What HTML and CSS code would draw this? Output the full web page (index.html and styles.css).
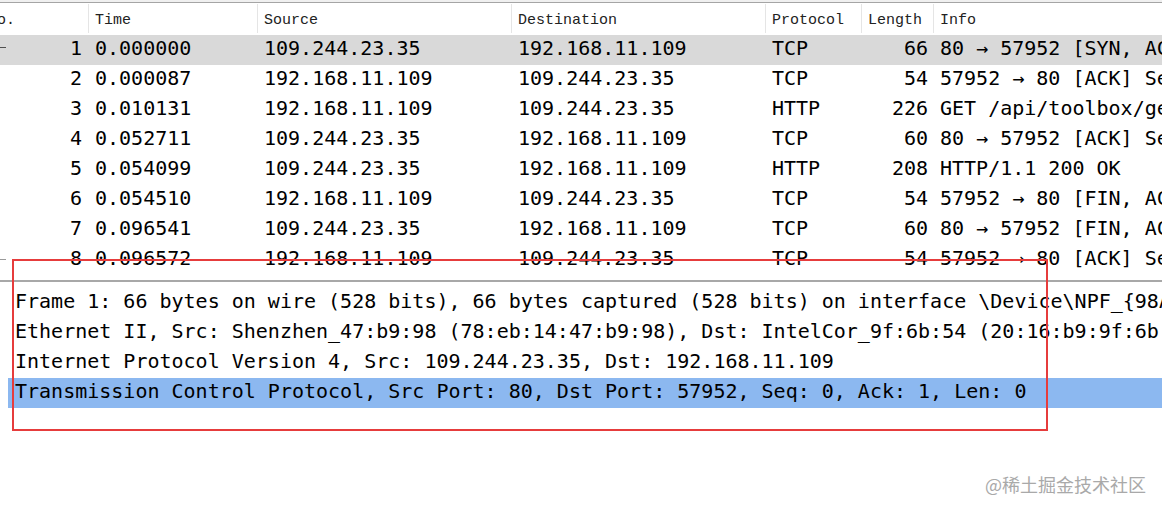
FILE: index.html
```html
<!DOCTYPE html>
<html>
<head>
<meta charset="utf-8">
<link rel="stylesheet" href="styles.css">
</head>
<body>
<div class="app">
  <div class="topbar"></div>
  <div class="plist">
    <div class="row head">
      <div class="c c0">No.</div>
      <div class="c">Time</div>
      <div class="c">Source</div>
      <div class="c">Destination</div>
      <div class="c">Protocol</div>
      <div class="c">Length</div>
      <div class="c last">Info</div>
    </div>
    <div class="row data sel">
      <div class="c c0 num"><span class="tree dark"></span>1</div>
      <div class="c">0.000000</div>
      <div class="c">109.244.23.35</div>
      <div class="c">192.168.11.109</div>
      <div class="c">TCP</div>
      <div class="c len">66</div>
      <div class="c info">80 → 57952 [SYN, ACK] Seq=0 Ack=1 Win=14600 Len=0 MSS=1440</div>
    </div>
    <div class="row data">
      <div class="c c0 num">2</div>
      <div class="c">0.000087</div>
      <div class="c">192.168.11.109</div>
      <div class="c">109.244.23.35</div>
      <div class="c">TCP</div>
      <div class="c len">54</div>
      <div class="c info">57952 → 80 [ACK] Seq=1 Ack=1 Win=65536 Len=0</div>
    </div>
    <div class="row data">
      <div class="c c0 num">3</div>
      <div class="c">0.010131</div>
      <div class="c">192.168.11.109</div>
      <div class="c">109.244.23.35</div>
      <div class="c">HTTP</div>
      <div class="c len">226</div>
      <div class="c info">GET /api/toolbox/getip HTTP/1.1</div>
    </div>
    <div class="row data">
      <div class="c c0 num">4</div>
      <div class="c">0.052711</div>
      <div class="c">109.244.23.35</div>
      <div class="c">192.168.11.109</div>
      <div class="c">TCP</div>
      <div class="c len">60</div>
      <div class="c info">80 → 57952 [ACK] Seq=1 Ack=173 Win=15744 Len=0</div>
    </div>
    <div class="row data">
      <div class="c c0 num">5</div>
      <div class="c">0.054099</div>
      <div class="c">109.244.23.35</div>
      <div class="c">192.168.11.109</div>
      <div class="c">HTTP</div>
      <div class="c len">208</div>
      <div class="c info">HTTP/1.1 200 OK</div>
    </div>
    <div class="row data">
      <div class="c c0 num">6</div>
      <div class="c">0.054510</div>
      <div class="c">192.168.11.109</div>
      <div class="c">109.244.23.35</div>
      <div class="c">TCP</div>
      <div class="c len">54</div>
      <div class="c info">57952 → 80 [FIN, ACK] Seq=173 Ack=155 Win=65280 Len=0</div>
    </div>
    <div class="row data">
      <div class="c c0 num">7</div>
      <div class="c">0.096541</div>
      <div class="c">109.244.23.35</div>
      <div class="c">192.168.11.109</div>
      <div class="c">TCP</div>
      <div class="c len">60</div>
      <div class="c info">80 → 57952 [FIN, ACK] Seq=155 Ack=174 Win=15744 Len=0</div>
    </div>
    <div class="row data">
      <div class="c c0 num"><span class="tree light"></span>8</div>
      <div class="c">0.096572</div>
      <div class="c">192.168.11.109</div>
      <div class="c">109.244.23.35</div>
      <div class="c">TCP</div>
      <div class="c len">54</div>
      <div class="c info">57952 → 80 [ACK] Seq=174 Ack=156 Win=65280 Len=0</div>
    </div>
  </div>
  <div class="splitter"></div>
  <div class="details">
    <div class="dline">Frame 1: 66 bytes on wire (528 bits), 66 bytes captured (528 bits) on interface \Device\NPF_{98A1C2E4-5B7D-4F21-9C3A-1E2F3D4B5C6A}, id 0</div>
    <div class="dline">Ethernet II, Src: Shenzhen_47:b9:98 (78:eb:14:47:b9:98), Dst: IntelCor_9f:6b:54 (20:16:b9:9f:6b:54)</div>
    <div class="dline">Internet Protocol Version 4, Src: 109.244.23.35, Dst: 192.168.11.109</div>
    <div class="dline hl">Transmission Control Protocol, Src Port: 80, Dst Port: 57952, Seq: 0, Ack: 1, Len: 0</div>
  </div>
  <div class="redbox"></div>
  <div class="watermark">@稀土掘金技术社区</div>
</div>
</body>
</html>
```

FILE: styles.css
```css
html, body {
  margin: 0;
  padding: 0;
  background: #ffffff;
  overflow: hidden;
}

.app {
  position: relative;
  width: 1162px;
  height: 512px;
  overflow: hidden;
  background: #ffffff;
}

.topbar {
  height: 2px;
  background: #f0f0f0;
  border-bottom: 1px solid #a5a5a5;
}

.plist {
  padding-top: 1px;
  height: 272px;
}

.row {
  display: grid;
  grid-template-columns: 88px 169px 254px 254px 96px 72px 1fr;
  white-space: nowrap;
}

.c {
  overflow: hidden;
  padding-left: 7px;
  box-sizing: border-box;
}

.head {
  height: 31px;
  font-family: "Liberation Mono", "DejaVu Sans Mono", monospace;
  font-size: 15px;
  color: #222222;
  align-items: start;
}

.head .c {
  height: 29px;
  line-height: 33px;
  border-left: 1px solid #e5e5e5;
  padding-left: 6px;
}

.head .c0 {
  border-left: none;
  text-indent: -18px;
  overflow: hidden;
}

.data {
  height: 30px;
  line-height: 26px;
  font-family: "DejaVu Sans Mono", "Liberation Mono", monospace;
  font-size: 20px;
  color: #000000;
}

.data .c {
  height: 30px;
}

.data.sel {
  background: #d9d9d9;
}

.num {
  text-align: right;
  padding-right: 6px;
  position: relative;
}

.len {
  text-align: right;
  padding-right: 5px;
}

.info {
  padding-left: 7px;
}

.tree {
  position: absolute;
  left: 0;
  top: 12px;
  width: 6px;
  height: 1px;
}

.tree.dark {
  background: #505050;
}

.tree.light {
  background: #9a9a9a;
  top: 14px;
}

.splitter {
  height: 4px;
  border-bottom: 2px solid #a8a8a8;
  background: #ffffff;
}

.details {
  padding-top: 6px;
  padding-left: 8px;
  font-family: "DejaVu Sans Mono", "Liberation Mono", monospace;
  font-size: 20px;
  color: #000000;
}

.dline {
  height: 30px;
  line-height: 26px;
  padding-left: 7px;
  white-space: nowrap;
  overflow: hidden;
}

.dline.hl {
  background: #8cb8f0;
}

.redbox {
  position: absolute;
  left: 12px;
  top: 259px;
  width: 1032px;
  height: 168px;
  border: 2px solid #e63c3c;
}

.watermark {
  position: absolute;
  left: 985px;
  top: 472px;
  font-family: "Noto Sans CJK SC", "DejaVu Sans", sans-serif;
  font-size: 18px;
  line-height: 24px;
  color: #a9a9a9;
  white-space: nowrap;
}
```
